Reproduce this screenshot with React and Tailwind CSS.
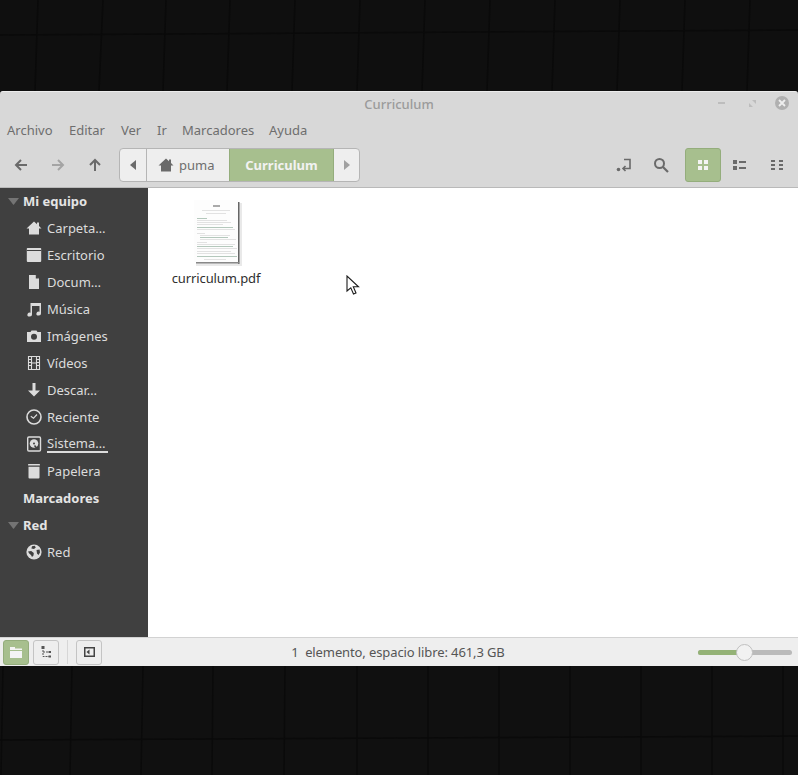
import React from "react";

const Home = ({ c = "#dcdcdc", s = 16 }) => (
  <svg width={s} height={s} viewBox="0 0 16 16"><path fill={c} d="M8 1.500 0.500 8.500H3V14.500H13V8.500H15.500L13 6V2.500H11V4.200Z" /></svg>
);
const Icons = {
  home: <Home />,
  desk: <svg width="16" height="16" viewBox="0 0 16 16"><path fill="#dcdcdc" d="M1.500 1h13a.7.7 0 0 1 .7.7V14a1 1 0 0 1-1 1H1.800a1 1 0 0 1-1-1V1.700a.7.7 0 0 1 .7-.7Z" /><rect x="0.800" y="3" width="14.400" height="1" fill="#404040" /></svg>,
  doc: <svg width="16" height="16" viewBox="0 0 16 16"><path fill="#dcdcdc" d="M3 1h6.500L13 4.800V15H3ZM9.800 1.400V4.600H13Z" /></svg>,
  music: <svg width="16" height="16" viewBox="0 0 16 16"><path fill="#dcdcdc" d="M4.500 2H15V12.500A2.300 2 0 1 1 13.500 10.700V5H6V13.500A2.300 2 0 1 1 4.500 11.700Z" /></svg>,
  cam: <svg width="16" height="16" viewBox="0 0 16 16"><path fill="#dcdcdc" fillRule="evenodd" d="M1 4H4.500L5.500 2.500H10.500L11.500 4H15V14H1ZM8 5.800A3 3 0 1 0 8 11.800 3 3 0 0 0 8 5.800Z" /></svg>,
  film: <svg width="16" height="16" viewBox="0 0 16 16"><path fill="none" stroke="#dcdcdc" strokeWidth="1.100" d="M2.500 1.500H13.500V14.500H2.500ZM5.500 1.500V14.500M10.500 1.500V14.500M5.500 8H10.500M2.500 4.500H5.500M2.500 7.500H5.500M2.500 10.500H5.500M10.500 4.500H13.500M10.500 7.500H13.500M10.500 10.500H13.500" /></svg>,
  down: <svg width="16" height="16" viewBox="0 0 16 16"><path fill="#dcdcdc" d="M6.500 1H9.500V8.500H14L8 14.500 2 8.500H6.500Z" /></svg>,
  clock: <svg width="16" height="16" viewBox="0 0 16 16"><circle cx="8" cy="8" r="7" fill="none" stroke="#dcdcdc" strokeWidth="1.600" /><path d="M4.800 7.200 7.500 9.200 11 5.500" fill="none" stroke="#dcdcdc" strokeWidth="1.100" /></svg>,
  disk: <svg width="16" height="16" viewBox="0 0 16 16"><rect x="1.700" y="1" width="12.800" height="14" rx="1.200" fill="none" stroke="#dcdcdc" strokeWidth="1.400" /><circle cx="8" cy="7.500" r="4.300" fill="#dcdcdc" /><circle cx="8" cy="7.500" r="1" fill="#404040" /><path d="M8.500 9.500 11.500 13" stroke="#404040" strokeWidth="1.600" /></svg>,
  trash: <svg width="16" height="16" viewBox="0 0 16 16"><rect x="2" y="1" width="12" height="1.600" rx=".7" fill="#dcdcdc" /><path fill="#dcdcdc" d="M2.500 3.800H13.500V14.500A1 1 0 0 1 12.500 15.500H3.500A1 1 0 0 1 2.500 14.500Z" /></svg>,
  globe: <svg width="16" height="16" viewBox="0 0 16 16"><circle cx="8" cy="8" r="7.600" fill="#dcdcdc" /><path fill="#404040" d="M6 2.200 8.700 1.800 9.800 3.400 8 5 5.400 4.600ZM2 7.500 5.200 7 7.800 9 7.500 11.500 6 13 5 11 3.200 9.500ZM10.500 6 13.600 5.400 14 8.500 12.500 11 11 9.500Z" /></svg>,
};

const Row = ({ icon, label, underline }) => (
  <div className="flex h-[27px] items-center pb-[2px] pl-[26px]">
    <span className="flex h-[16px] w-[16px] shrink-0 items-center justify-center">{Icons[icon]}</span>
    <span className={`ml-[5px] leading-[18px] text-[#dcdcdc] ${underline ? "h-[19px] border-b-2 border-[#dcdcdc] pr-[3px]" : ""}`}>{label}</span>
  </div>
);
const Head = ({ label, open }) => (
  <div className="flex h-[27px] items-center font-bold text-[#e4e4e4]">
    <span className="flex w-[23px] justify-start pl-[8px]">
      {open && <svg width="11" height="7" viewBox="0 0 11 7"><path fill="#747474" d="M0 0H11L5.500 7Z" /></svg>}
    </span>
    {label}
  </div>
);
const Tri = ({ d, c }) => (
  <svg width="6" height="10" viewBox="0 0 6 10"><path fill={c} d={d} /></svg>
);
const Arrow = ({ d, c }) => (
  <svg width="16" height="16" viewBox="0 0 16 16"><path d={d} fill="none" stroke={c} strokeWidth="2" /></svg>
);

const pdfLines = [
  [8, 10, 28], [12, 13, 20], [3, 18, 10], [3, 20, 30], [3, 22, 34], [3, 24, 26], [3, 27, 36], [3, 29, 38],
  [3, 33, 8], [6, 35, 30], [6, 37, 28], [6, 39, 36], [3, 42, 10], [3, 44, 38], [3, 46, 36], [3, 48, 40], [3, 51, 34], [3, 53, 38], [3, 56, 40], [10, 59, 22],
];

function Wall({ h, lines, cross }) {
  return (
    <svg width="798" height={h} className="block">
      <g stroke="#0a0a0a" strokeWidth="1.500">
        {lines.map(([a, b], i) => <path key={i} d={`M${a} 0 L${b} ${h}`} />)}
        <path d={`M0 ${cross[0]} L798 ${cross[1]}`} />
      </g>
    </svg>
  );
}
const topLines = [[38, 35], [103, 99], [166, 163], [230, 227], [295, 292], [360, 357], [425, 422], [490, 487], [555, 552], [620, 617], [685, 682], [750, 747]];
const botLines = [[3, 1], [72, 70], [143, 141], [213, 212], [285, 284], [357, 357], [428, 428], [499, 499], [570, 570], [641, 641], [712, 712], [783, 783]];

export default function App() {
  return (
    <div className="relative flex h-[775px] w-[798px] flex-col overflow-hidden bg-[#0f0f0f] font-['Noto_Sans',sans-serif] text-[13px]">
      <div className="h-[91px] shrink-0"><Wall h={91} lines={topLines} cross={[35, 30]} /></div>

      <div className="flex h-[575px] shrink-0 flex-col rounded-t-[3px] border-t border-[#ececec] bg-[#d8d8d8]">
        <div className="relative flex h-[25px] shrink-0 items-center justify-center pt-[1px] font-medium text-[#9b9b9b]">
          Curriculum
          <div className="absolute right-[9px] top-[4px] flex items-center">
            <span className="mr-[24px] h-[2px] w-[7px] bg-[#bdbdbd]" />
            <svg className="mr-[19px]" width="7" height="7" viewBox="0 0 7 7"><path fill="#bdbdbd" d="M0 3V7H4ZM3 0H7V4Z" /></svg>
            <span className="flex h-[14px] w-[14px] items-center justify-center rounded-full bg-[#b0b0b0]">
              <svg width="8" height="8" viewBox="0 0 8 8"><path d="M1 1 7 7M7 1 1 7" stroke="#eeeeee" strokeWidth="1.800" /></svg>
            </span>
          </div>
        </div>

        <div className="flex h-[28px] shrink-0 items-center pl-[7px] text-[#6e6e6e]">
          <span className="w-[62px]">Archivo</span>
          <span className="w-[52px]">Editar</span>
          <span className="w-[36px]">Ver</span>
          <span className="w-[25px]">Ir</span>
          <span className="w-[87px]">Marcadores</span>
          <span>Ayuda</span>
        </div>

        <div className="flex h-[43px] shrink-0 items-start border-b border-[#b9b9b9] pt-[3px]">
          <div className="flex h-[34px] w-[119px] shrink-0 items-center">
            <span className="flex w-[42px] justify-center"><Arrow c="#6a6a6a" d="M14 8H3M8 3 3 8 8 13" /></span>
            <span className="flex w-[32px] justify-center"><Arrow c="#a4a4a4" d="M2 8H13M8 3 13 8 8 13" /></span>
            <span className="flex w-[42px] justify-center"><Arrow c="#6a6a6a" d="M8 14V3M3 8 8 3 13 8" /></span>
          </div>

          <div className="flex h-[34px] w-[241px] overflow-hidden rounded-[4px] border border-[#b5b5b5] bg-[#eeeeee]">
            <span className="flex w-[27px] items-center justify-center border-r border-[#b5b5b5]"><Tri c="#6a6a6a" d="M6 0V10L0 5Z" /></span>
            <span className="flex w-[82px] items-center pl-[11px] text-[#6e6e6e]">
              <Home c="#6a6a6a" s={16} />
              <span className="ml-[5px] pt-[1px]">puma</span>
            </span>
            <span className="flex w-[105px] items-center justify-center border-x border-[#94ad7c] bg-[#a7bf8e] pt-[2px] font-bold text-[#f2f2f2]">Curriculum</span>
            <span className="flex flex-1 items-center justify-center"><Tri c="#a0a0a0" d="M0 0V10L6 5Z" /></span>
          </div>

          <div className="ml-auto flex h-[34px] items-center pr-[3px]">
            <span className="flex w-[28px] justify-center">
              <svg width="16" height="16" viewBox="0 0 16 16"><circle cx="2.500" cy="12.500" r="1.800" fill="#6a6a6a" /><path d="M8 2.500H14V11.500H7M9.500 9 7 11.500 9.500 14" fill="none" stroke="#6a6a6a" strokeWidth="1.600" /></svg>
            </span>
            <span className="ml-[9px] flex w-[28px] justify-center">
              <svg width="16" height="16" viewBox="0 0 16 16"><circle cx="6.500" cy="6.500" r="4.500" fill="none" stroke="#6a6a6a" strokeWidth="2" /><path d="M10 10 15 15" stroke="#6a6a6a" strokeWidth="2.200" /></svg>
            </span>
            <span className="ml-[10px] flex h-[34px] w-[36px] items-center justify-center rounded-[3px] border border-[#94ad7c] bg-[#a7bf8e]">
              <svg width="10" height="10" viewBox="0 0 10 10"><path fill="#f4f4f4" d="M0 0H4V4H0ZM6 0H10V4H6ZM0 6H4V10H0ZM6 6H10V10H6Z" /></svg>
            </span>
            <span className="flex w-[37px] justify-center">
              <svg width="13" height="10" viewBox="0 0 13 10"><path fill="#6a6a6a" d="M0 0H4V4H0ZM0 6H4V10H0ZM6 1H13V3H6ZM6 7H13V9H6Z" /></svg>
            </span>
            <span className="flex w-[37px] justify-center">
              <svg width="12" height="10" viewBox="0 0 12 10"><path fill="#6a6a6a" d="M0 0H4V2H0ZM0 4H4V6H0ZM0 8H4V10H0ZM8 0H12V2H8ZM8 4H12V6H8ZM8 8H12V10H8Z" /></svg>
            </span>
          </div>
        </div>

        <div className="flex min-h-0 flex-1">
          <div className="w-[148px] shrink-0 bg-[#404040]">
            <Head label="Mi equipo" open />
            <Row icon="home" label="Carpeta…" />
            <Row icon="desk" label="Escritorio" />
            <Row icon="doc" label="Docum…" />
            <Row icon="music" label="Música" />
            <Row icon="cam" label="Imágenes" />
            <Row icon="film" label="Vídeos" />
            <Row icon="down" label="Descar…" />
            <Row icon="clock" label="Reciente" />
            <Row icon="disk" label="Sistema…" underline />
            <Row icon="trash" label="Papelera" />
            <Head label="Marcadores" />
            <Head label="Red" open />
            <Row icon="globe" label="Red" />
          </div>

          <div className="relative flex-1 bg-white pl-[24px] pt-[12px]">
            <div className="flex w-[88px] flex-col items-center">
              <svg width="48" height="66" viewBox="0 0 48 66" className="ml-[3px]">
                <rect x="2" y="3" width="46" height="63" fill="#b5b5b5" opacity="0.3" />
                <rect x="44" y="2" width="1.500" height="62" fill="#666666" />
                <rect x="2" y="62" width="43" height="1.500" fill="#888888" />
                <rect x="0" y="0" width="44" height="62" fill="#fdfdfd" />
                <rect x="19" y="5" width="7" height="2" fill="#aaaaaa" />
                {pdfLines.map(([x, y, w], i) => (
                  <rect key={i} x={x} y={y} width={w} height="1" fill={i % 4 === 2 ? "#b4c8bc" : "#e2e2e2"} />
                ))}
              </svg>
              <span className="mt-[3px] whitespace-nowrap tracking-[-0.1px] text-[#2f2f2f]">curriculum.pdf</span>
            </div>
            <svg className="absolute left-[198px] top-[87px]" width="14" height="21" viewBox="0 0 14 21">
              <path d="M1 1V16L4.800 12.800 7.500 19 10 18 7.300 11.800H12.500Z" fill="#ffffff" stroke="#1c1c1c" strokeWidth="1.100" />
            </svg>
          </div>
        </div>

        <div className="flex h-[29px] shrink-0 items-center border-t border-[#d2d2d2] bg-[#eeeeee] pl-[3px] text-[#555555]">
          <span className="flex h-[25px] w-[26px] items-center justify-center rounded-[3px] border border-[#94ad7c] bg-[#a7bf8e]">
            <svg width="12" height="11" viewBox="0 0 12 11"><path fill="#f4f4f4" d="M0 0H5V1.500H12V3H0ZM0 4H12V11H0Z" /></svg>
          </span>
          <span className="ml-[4px] flex h-[25px] w-[26px] items-center justify-center rounded-[3px] border border-[#c4c4c4]">
            <svg width="10" height="12" viewBox="0 0 10 12"><path d="M2 1V10.500H8M2 6H8" fill="none" stroke="#555555" strokeWidth="1" strokeDasharray="2 1" /><rect x="0.500" y="0" width="3" height="3" fill="#555555" /><rect x="7.500" y="5" width="2.500" height="2" fill="#555555" /><rect x="7.500" y="9.500" width="2.500" height="2" fill="#555555" /></svg>
          </span>
          <span className="ml-[8px] h-[24px] w-px bg-[#d6d6d6]" />
          <span className="ml-[8px] flex h-[25px] w-[26px] items-center justify-center rounded-[3px] border border-[#c4c4c4]">
            <svg width="11" height="10" viewBox="0 0 11 10"><path d="M.75.75H10.250V9.250H.75Z" fill="none" stroke="#444444" strokeWidth="1.500" /><path d="M5.500 2.500V7.500L2.500 5Z" fill="#444444" /></svg>
          </span>
          <span className="ml-[189px] w-[214px] whitespace-pre pt-[1px] text-center tracking-[-0.11px]">1  elemento, espacio libre: 461,3 GB</span>
          <div className="relative ml-[193px] flex h-[5px] w-[94px] overflow-visible rounded-full bg-[#bababa]">
            <span className="h-[5px] w-[44px] rounded-l-full bg-[#94b276]" />
            <span className="absolute left-[38px] top-[-6px] h-[17px] w-[17px] rounded-full border border-[#c0c0c0] bg-[#f2f2f2]" />
          </div>
        </div>
      </div>

      <div className="min-h-0 flex-1 bg-[#101010]"><Wall h={109} lines={botLines} cross={[74, 70]} /></div>
    </div>
  );
}
